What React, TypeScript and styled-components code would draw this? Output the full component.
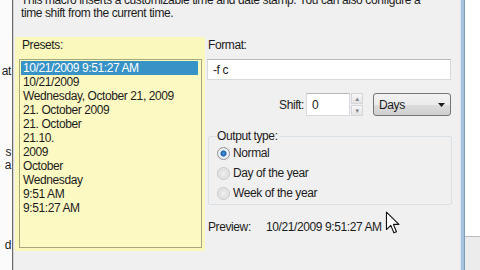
import React from "react";
import styled, { createGlobalStyle } from "styled-components";

const GlobalStyle = createGlobalStyle`
  html, body {
    margin: 0;
    padding: 0;
    background: #f0f0f0;
    overflow: hidden;
  }
  body {
    font-family: "Liberation Sans", Arial, sans-serif;
    font-size: 12px;
    letter-spacing: -0.4px;
    color: #1c1c1c;
  }
`;

const presets = [
  "10/21/2009 9:51:27 AM",
  "10/21/2009",
  "Wednesday, October 21, 2009",
  "21. October 2009",
  "21. October",
  "21.10.",
  "2009",
  "October",
  "Wednesday",
  "9:51 AM",
  "9:51:27 AM",
];

const outputTypes = ["Normal", "Day of the year", "Week of the year"];

const Screen = styled.div`
  display: flex;
  width: 480px;
  height: 270px;
  overflow: hidden;
`;

const BackWindow = styled.div`
  width: 12px;
  background: #fbfbfb;
  display: flex;
  flex-direction: column;
  align-items: flex-end;
  overflow: hidden;
`;

const Fragment = styled.span<{ $top: number }>`
  margin-top: ${(p) => p.$top}px;
  height: 10px;
  line-height: 10px;
  white-space: nowrap;
  padding-right: 1px;
`;

const FrameLeft = styled.div`
  width: 1px;
  background: #6b6b6b;
  border-right: 1px solid #d4d4d4;
`;

const Dialog = styled.div`
  position: relative;
  width: 446px;
  background: #f0f0f0;
  display: flex;
  flex-direction: column;
`;

const Intro = styled.p`
  margin: -6px 0 0;
  padding-left: 7px;
  line-height: 13px;
  white-space: nowrap;
`;

const Body = styled.div`
  display: flex;
  gap: 2px;
  margin-top: 17px;
  padding-left: 1px;
`;

const PresetsPanel = styled.div`
  width: 190px;
  height: 214px;
  box-sizing: border-box;
  background: #fbf8bd;
  padding: 0 3px 3px 4px;
  display: flex;
  flex-direction: column;
`;

const Label = styled.div`
  line-height: 16px;
  padding-left: 3px;
`;

const ListBox = styled.ul`
  list-style: none;
  margin: 6px 0 0;
  padding: 1px 3px 0 1px;
  flex: 1;
  border: 1px solid #a8a67c;
  background: #fcf9c2;
`;

const ListItem = styled.li<{ $selected?: boolean }>`
  height: 14px;
  line-height: 14px;
  padding-left: 2px;
  white-space: nowrap;
  background: ${(p) => (p.$selected ? "#3792c6" : "transparent")};
  color: ${(p) => (p.$selected ? "#ffffff" : "#1c1c1c")};
`;

const Settings = styled.div`
  width: 245px;
  display: flex;
  flex-direction: column;
`;

const FormatLabel = styled.div`
  line-height: 16px;
  padding-left: 1px;
`;

const TextBox = styled.div<{ $width?: number }>`
  box-sizing: border-box;
  height: ${(p) => (p.$width ? 23 : 21)}px;
  width: ${(p) => (p.$width ? `${p.$width}px` : "auto")};
  background: #ffffff;
  border: 1px solid #d6d9dd;
  border-top-color: #b5b8bd;
  padding-left: 5px;
  display: flex;
  align-items: center;
`;

const FormatBox = styled(TextBox)`
  margin-top: 6px;
  margin-right: 1px;
`;

const ShiftRow = styled.div`
  display: flex;
  align-items: center;
  margin-top: 13px;
  height: 23px;
`;

const ShiftLabel = styled.span`
  width: 97px;
  text-align: right;
  padding-right: 2px;
`;

const Spin = styled.div`
  width: 12px;
  height: 23px;
  display: flex;
  flex-direction: column;
  gap: 1px;
  margin-left: 1px;
`;

const SpinButton = styled.div`
  flex: 1;
  box-sizing: border-box;
  border: 1px solid #d3d6da;
  background: linear-gradient(#f7f7f7, #e4e4e4);
  display: flex;
  align-items: center;
  justify-content: center;
  color: #7c8187;
  font-size: 6px;
  line-height: 1;
`;

const Combo = styled.div`
  box-sizing: border-box;
  width: 78px;
  height: 23px;
  margin-left: 10px;
  border: 1px solid #767676;
  border-radius: 3px;
  background: linear-gradient(#f3f3f3 0%, #ebebeb 50%, #dddddd 51%, #cfcfcf 100%);
  display: flex;
  align-items: center;
  justify-content: space-between;
  padding: 0 5px 0 5px;
`;

const GroupBox = styled.fieldset`
  margin: 13px 0 0 1px;
  padding: 0 0 1px 8px;
  width: 244px;
  box-sizing: border-box;
  border: 1px solid #d9e1e6;
  border-radius: 2px;
  min-width: 0;
`;

const Legend = styled.legend`
  padding: 0 1px 0 0;
  line-height: 14px;
`;

const RadioRow = styled.label`
  display: flex;
  align-items: center;
  gap: 3px;
  height: 20px;
`;

const RadioCircle = styled.span<{ $checked?: boolean }>`
  box-sizing: border-box;
  width: 13px;
  height: 13px;
  border-radius: 50%;
  border: 1px solid ${(p) => (p.$checked ? "#8c8f94" : "#c4c6c8")};
  background: ${(p) =>
    p.$checked
      ? "radial-gradient(circle, #4c9be0 0, #1d5fb0 2.5px, #e9eef3 3.5px, #f5f7f9 100%)"
      : "radial-gradient(circle, #f2f2f2 0, #e1e1e1 4px, #f4f4f4 100%)"};
`;

const PreviewRow = styled.div`
  display: flex;
  margin-top: 14px;
  line-height: 16px;
  padding-left: 1px;
`;

const PreviewLabel = styled.span`
  width: 58px;
`;

const Cursor = styled.svg`
  position: absolute;
  left: 371px;
  top: 211px;
`;

const FrameRight = styled.div`
  width: 3px;
  background: #a6c3de;
  border-left: 1px solid #dbe6ef;
  border-right: 1px solid #7d9dbc;
`;

const BehindRight = styled.div`
  flex: 1;
  display: flex;
  flex-direction: column;
`;

const WhitePart = styled.div`
  height: 236px;
  background: #ffffff;
  border-bottom: 1px solid #b9bcc0;
`;

const GreyPart = styled.div`
  flex: 1;
  background: #ececec;
`;

export default function App() {
  return (
    <>
      <GlobalStyle />
      <Screen>
        <BackWindow>
          <Fragment $top={66}>at</Fragment>
          <Fragment $top={71}>s</Fragment>
          <Fragment $top={3}>a</Fragment>
          <Fragment $top={70}>d</Fragment>
        </BackWindow>
        <FrameLeft />
        <Dialog>
          <Intro>
            This macro inserts a customizable time and date stamp. You can also configure a
            <br />
            time shift from the current time.
          </Intro>
          <Body>
            <PresetsPanel>
              <Label>Presets:</Label>
              <ListBox>
                {presets.map((p, i) => (
                  <ListItem key={p + i} $selected={i === 0}>
                    {p}
                  </ListItem>
                ))}
              </ListBox>
            </PresetsPanel>
            <Settings>
              <FormatLabel>Format:</FormatLabel>
              <FormatBox>-f c</FormatBox>
              <ShiftRow>
                <ShiftLabel>Shift:</ShiftLabel>
                <TextBox $width={44}>0</TextBox>
                <Spin>
                  <SpinButton>▲</SpinButton>
                  <SpinButton>▼</SpinButton>
                </Spin>
                <Combo>
                  <span>Days</span>
                  <svg width="7" height="4" viewBox="0 0 7 4">
                    <path d="M0 0 H7 L3.5 4 Z" fill="#1a1a1a" />
                  </svg>
                </Combo>
              </ShiftRow>
              <GroupBox>
                <Legend>Output type:</Legend>
                {outputTypes.map((t, i) => (
                  <RadioRow key={t}>
                    <RadioCircle $checked={i === 0} />
                    {t}
                  </RadioRow>
                ))}
              </GroupBox>
              <PreviewRow>
                <PreviewLabel>Preview:</PreviewLabel>
                <span>10/21/2009 9:51:27 AM</span>
              </PreviewRow>
            </Settings>
          </Body>
          <Cursor width="16" height="24" viewBox="0 0 14 22">
            <path
              d="M1 1 L1 17 L5 13.2 L7.8 20 L10.2 19 L7.4 12.3 L12.4 12.3 Z"
              fill="#ffffff"
              stroke="#111111"
              strokeWidth="1"
              strokeLinejoin="round"
            />
          </Cursor>
        </Dialog>
        <FrameRight />
        <BehindRight>
          <WhitePart />
          <GreyPart />
        </BehindRight>
      </Screen>
    </>
  );
}
